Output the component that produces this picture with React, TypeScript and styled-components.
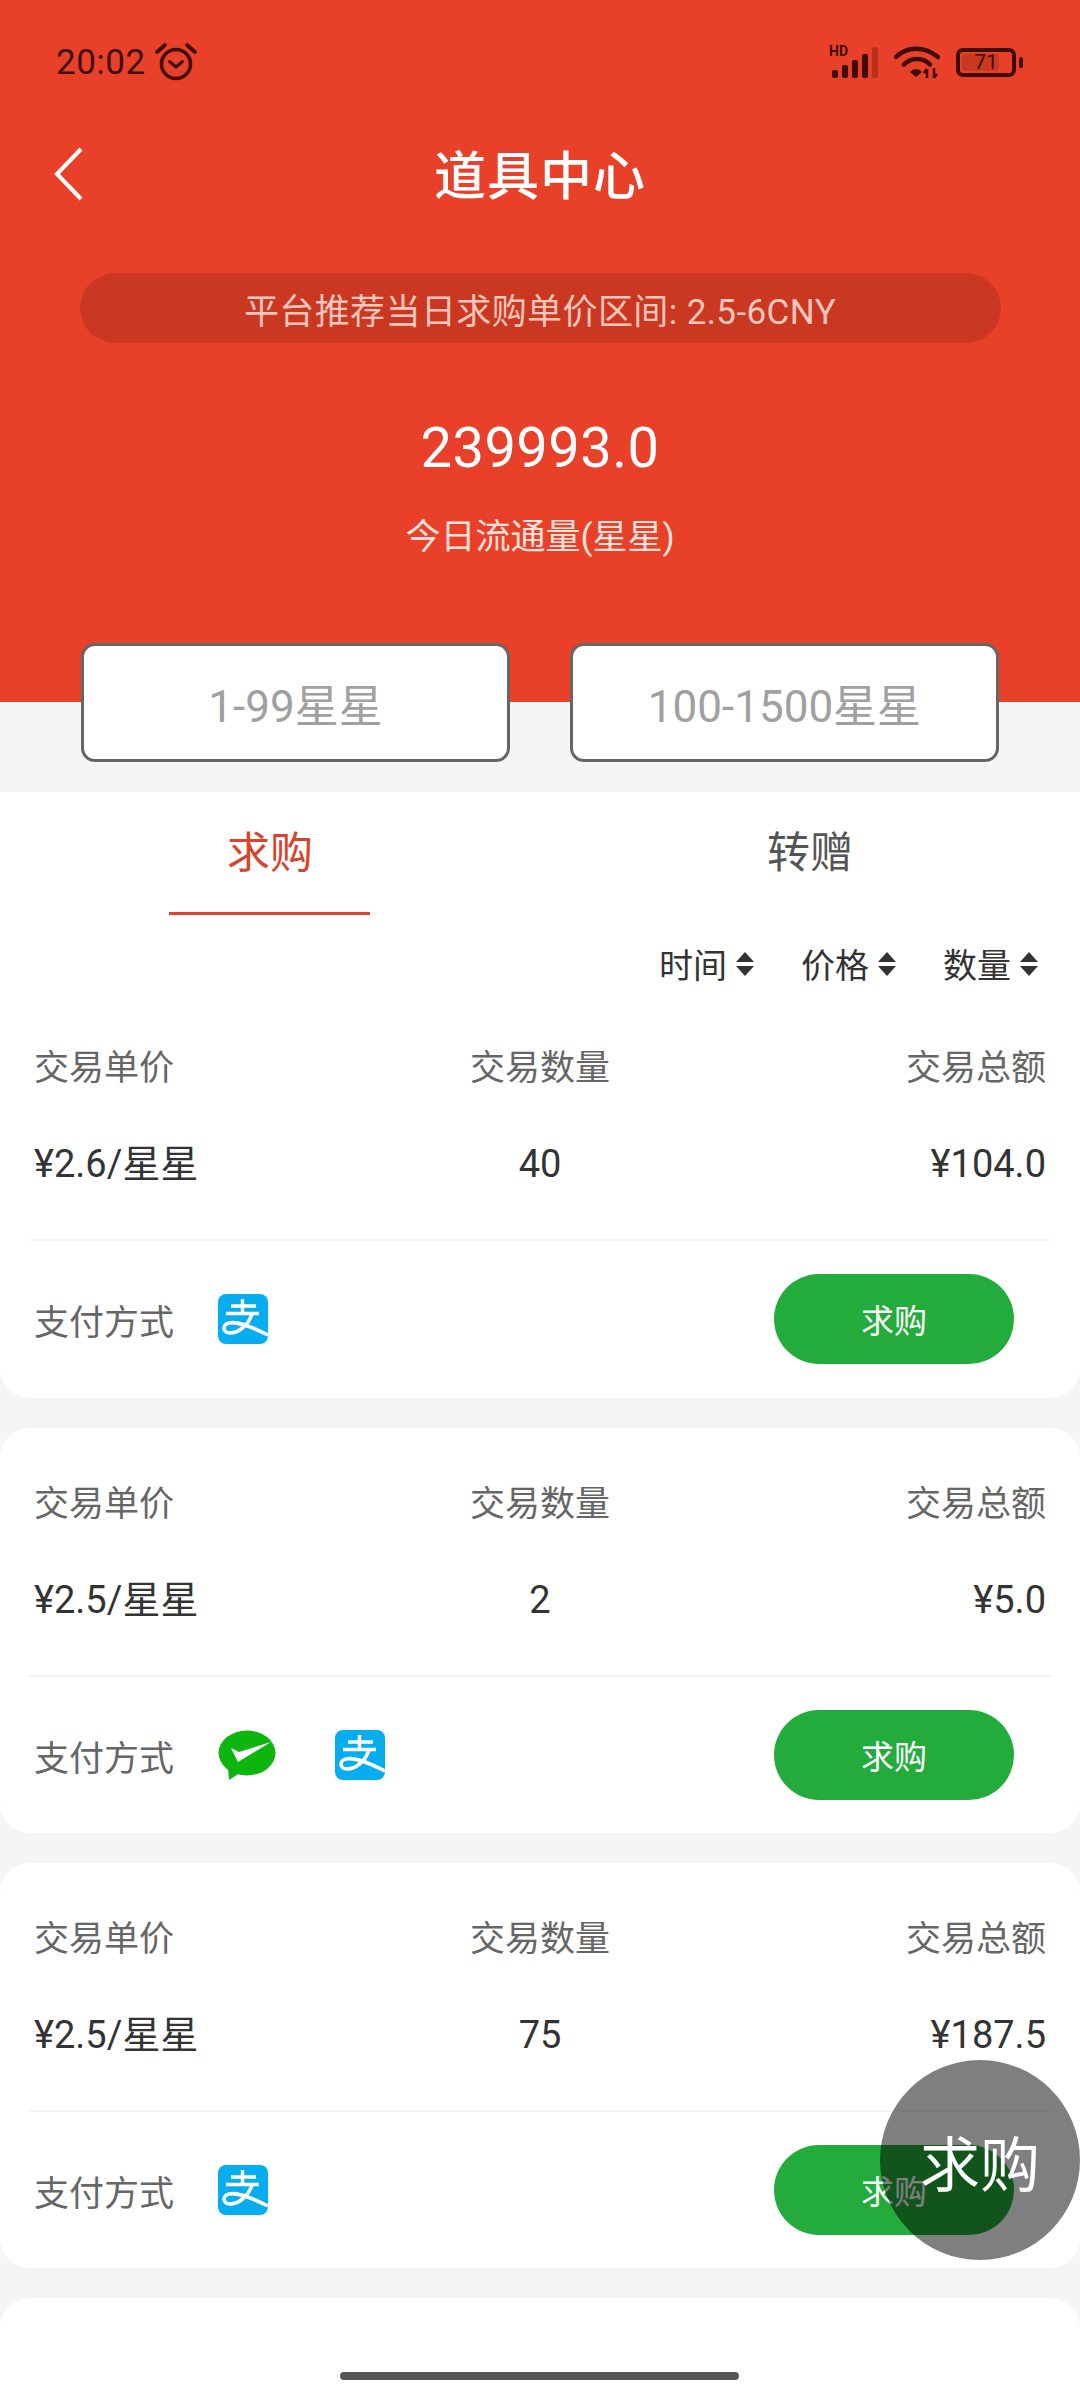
import { FC } from "react";
import styled, { createGlobalStyle } from "styled-components";

const GlobalStyle = createGlobalStyle`
  html, body {
    margin: 0;
    padding: 0;
    background: #f5f5f5;
  }
  * {
    box-sizing: border-box;
  }
`;

// css
const Page = styled.div`
  position: relative;
  width: 1080px;
  height: 2400px;
  overflow: hidden;
  background: #f5f5f5;
  font-family: Roboto, "Noto Sans CJK SC", sans-serif;
`;

const Header = styled.header`
  height: 702px;
  background: #e94129;
  display: flex;
  flex-direction: column;
  align-items: center;
`;

const StatusBar = styled.div`
  width: 100%;
  height: 124px;
  padding: 0 64px 0 56px;
  display: flex;
  align-items: center;
  justify-content: space-between;
  color: #3f0d05;
`;

const StatusLeft = styled.div`
  display: flex;
  align-items: center;
  gap: 9px;
`;

const Clock = styled.span`
  font-size: 35px;
  letter-spacing: 0.5px;
`;

const StatusRight = styled.div`
  display: flex;
  align-items: center;
  gap: 13px;
`;

const SignalWrap = styled.div`
  position: relative;
  width: 50px;
  height: 32px;
`;

const HdLabel = styled.span`
  position: absolute;
  left: -2px;
  top: -3px;
  font-size: 14px;
  line-height: 16px;
  font-weight: 700;
`;

const Battery = styled.div`
  position: relative;
  width: 60px;
  height: 29px;
  margin-left: 3px;
  border: 4px solid #3f0d05;
  border-radius: 7px;
  display: flex;
  align-items: center;
  justify-content: center;
  overflow: visible;
  &::after {
    content: "";
    position: absolute;
    right: -11px;
    top: 5px;
    width: 4px;
    height: 11px;
    border-radius: 2px;
    background: #3f0d05;
  }
`;

const BatteryFill = styled.div`
  position: absolute;
  left: 2px;
  top: 2px;
  bottom: 2px;
  border-radius: 2px;
  background: #c83a20;
`;

const BatteryText = styled.span`
  position: relative;
  font-size: 21px;
  line-height: 21px;
`;

const TitleBar = styled.div`
  position: relative;
  width: 100%;
  height: 96px;
  display: flex;
  align-items: center;
  justify-content: center;
`;

const BackButton = styled.div`
  position: absolute;
  left: 52px;
  top: 22px;
  width: 34px;
  height: 56px;
`;

const Title = styled.h1`
  margin: 0;
  font-size: 52px;
  font-weight: 500;
  color: #fff;
  letter-spacing: 1px;
`;

const Notice = styled.div`
  width: 921px;
  height: 70px;
  margin-top: 53px;
  border-radius: 35px;
  background: #ca3822;
  color: #fbc6bb;
  font-size: 35px;
  letter-spacing: 0.4px;
  display: flex;
  align-items: center;
  justify-content: center;
`;

const Amount = styled.div`
  margin-top: 65px;
  height: 80px;
  line-height: 80px;
  font-size: 56px;
  color: #fff;
  letter-spacing: 0.5px;
`;

const AmountLabel = styled.div`
  margin-top: 25px;
  height: 50px;
  line-height: 50px;
  font-size: 35px;
  color: #fde3dd;
`;

const PackRow = styled.div`
  position: relative;
  margin-top: -59px;
  padding: 0 81px;
  display: flex;
  justify-content: space-between;
`;

const PackButton = styled.div`
  width: 429px;
  height: 119px;
  background: #fff;
  border: 3px solid #666;
  border-radius: 14px;
  color: #a0a0a0;
  font-size: 44px;
  display: flex;
  align-items: center;
  justify-content: center;
`;

const Tabs = styled.div`
  margin-top: 30px;
  height: 124px;
  background: #fff;
  display: grid;
  grid-template-columns: 1fr 1fr;
`;

const Tab = styled.div<{ $active?: boolean }>`
  position: relative;
  display: flex;
  justify-content: center;
  padding-top: 31px;
  font-size: 43px;
  line-height: 60px;
  color: ${(p) => (p.$active ? "#d9432b" : "#555")};
  &::after {
    content: "";
    display: ${(p) => (p.$active ? "block" : "none")};
    position: absolute;
    left: 169px;
    bottom: 1px;
    width: 201px;
    height: 3px;
    background: #d9432b;
  }
`;

const SortBar = styled.div`
  height: 95px;
  background: #fff;
  padding-right: 42px;
  display: flex;
  align-items: center;
  justify-content: flex-end;
  gap: 47px;
`;

const SortItem = styled.div`
  display: flex;
  align-items: center;
  gap: 9px;
  font-size: 34px;
  color: #333;
`;

const Card = styled.section<{ $first?: boolean }>`
  background: #fff;
  height: ${(p) => (p.$first ? "387px" : "405px")};
  margin-bottom: 30px;
  padding-top: ${(p) => (p.$first ? "33px" : "52px")};
  border-radius: ${(p) => (p.$first ? "0 0 30px 30px" : "30px")};
`;

const Columns = styled.div`
  display: grid;
  grid-template-columns: 1fr 1fr 1fr;
  padding: 0 34px;
`;

const Label = styled.div<{ $align: string }>`
  height: 50px;
  line-height: 50px;
  font-size: 35px;
  color: #666;
  text-align: ${(p) => p.$align};
`;

const Value = styled.div<{ $align: string }>`
  margin-top: 45px;
  height: 50px;
  line-height: 50px;
  font-size: 38px;
  color: #333;
  text-align: ${(p) => p.$align};
`;

const Divider = styled.div`
  height: 2px;
  margin: 50px 30px 0;
  background: #f3f3f3;
`;

const PayRow = styled.div`
  margin-top: 33px;
  padding: 0 66px 0 34px;
  display: flex;
  align-items: center;
`;

const PayLabel = styled.span`
  font-size: 35px;
  color: #666;
  margin-right: 44px;
`;

const PayIcons = styled.div`
  display: flex;
  align-items: center;
  gap: 59px;
`;

const BuyButton = styled.div`
  margin-left: auto;
  width: 240px;
  height: 90px;
  border-radius: 45px;
  background: #23ab3b;
  color: #fff;
  font-size: 33px;
  display: flex;
  align-items: center;
  justify-content: center;
`;

const FloatButton = styled.div`
  position: absolute;
  left: 880px;
  top: 2060px;
  width: 200px;
  height: 200px;
  border-radius: 50%;
  background: rgba(0, 0, 0, 0.5);
  color: #fff;
  font-size: 60px;
  display: flex;
  align-items: center;
  justify-content: center;
`;

const HomeBar = styled.div`
  position: absolute;
  left: 340px;
  bottom: 20px;
  width: 399px;
  height: 8px;
  border-radius: 4px;
  background: #555;
`;

const AlarmIcon: FC = () => (
  <svg width="42" height="40" viewBox="0 0 42 40" fill="none" stroke="#3f0d05">
    <circle cx="21" cy="22" r="14.5" strokeWidth="3.6" />
    <path d="M14.5 19.5 21 25l6.5-5.5" strokeWidth="3" strokeLinecap="round" strokeLinejoin="round" />
    <path d="M2 10 10 3M40 10 32 3" strokeWidth="4" strokeLinecap="round" />
  </svg>
);

const SignalIcon: FC = () => (
  <SignalWrap>
    <HdLabel>HD</HdLabel>
    <svg width="50" height="32" viewBox="0 0 50 32" fill="#3f0d05">
      <rect x="1" y="24" width="6" height="8" rx="2" />
      <rect x="11" y="19" width="6" height="13" rx="2" />
      <rect x="21" y="14" width="6" height="18" rx="2" />
      <rect x="31" y="8" width="6" height="24" rx="2" />
      <rect x="41" y="1" width="6" height="31" rx="2" fill="#b8321b" />
    </svg>
  </SignalWrap>
);

const WifiIcon: FC = () => (
  <svg width="46" height="34" viewBox="0 0 46 34" fill="none" stroke="#3f0d05">
    <path d="M2 12C13 1 31 1 44 12" strokeWidth="4.5" strokeLinecap="round" />
    <path d="M10 19.5C17 12 29 12 36 19.5" strokeWidth="4.5" strokeLinecap="round" />
    <path d="M16 32l-6-5c3-4 9-4 12 0z" transform="translate(6 0)" fill="#3f0d05" stroke="none" />
    <path d="M33 33v-9M33 24l-3 4M40 23v10M40 33l3-4" strokeWidth="2.6" />
  </svg>
);

const AlipayIcon: FC = () => (
  <svg width="50" height="50" viewBox="0 0 50 50" fill="none">
    <rect width="50" height="50" rx="8" fill="#06aef0" />
    <path d="M13 12H38M8 19.5H41M24.5 5V19" stroke="#fff" strokeWidth="3.4" />
    <path d="M34 20C30 32 20 39 12 39C4.5 39 4 30.5 11 29C20 27 34 33 50 41" stroke="#fff" strokeWidth="3.6" />
  </svg>
);

const WechatIcon: FC = () => (
  <svg width="58" height="50" viewBox="0 0 58 50" fill="none">
    <ellipse cx="29" cy="23" rx="28.5" ry="22.5" fill="#0fb50f" />
    <path d="M10 38 11 50 22 43z" fill="#0fb50f" />
    <path d="M13 18 21 22 53 12 20 32z" fill="#fff" />
  </svg>
);

const SortCaret: FC = () => (
  <svg width="18" height="24" viewBox="0 0 18 24" fill="#333">
    <path d="M9 0 18 10H0zM9 24 0 14H18z" />
  </svg>
);

type PayType = "alipay" | "wechat";

interface IOrder {
  price: string;
  count: string;
  total: string;
  pay: PayType[];
}

const orders: IOrder[] = [
  { price: "¥2.6/星星", count: "40", total: "¥104.0", pay: ["alipay"] },
  { price: "¥2.5/星星", count: "2", total: "¥5.0", pay: ["wechat", "alipay"] },
  { price: "¥2.5/星星", count: "75", total: "¥187.5", pay: ["alipay"] },
];

const App: FC = () => {
  return (
    <Page>
      <GlobalStyle />
      <Header>
        <StatusBar>
          <StatusLeft>
            <Clock>20:02</Clock>
            <AlarmIcon />
          </StatusLeft>
          <StatusRight>
            <SignalIcon />
            <WifiIcon />
            <Battery>
              <BatteryFill style={{ width: "71%" }} />
              <BatteryText>71</BatteryText>
            </Battery>
          </StatusRight>
        </StatusBar>
        <TitleBar>
          <BackButton>
            <svg width="34" height="56" viewBox="0 0 34 56" fill="none">
              <path d="M29 3 5 28l24 25" stroke="#fff" strokeWidth="4" />
            </svg>
          </BackButton>
          <Title>道具中心</Title>
        </TitleBar>
        <Notice>平台推荐当日求购单价区间: 2.5-6CNY</Notice>
        <Amount>239993.0</Amount>
        <AmountLabel>今日流通量(星星)</AmountLabel>
      </Header>
      <PackRow>
        <PackButton>1-99星星</PackButton>
        <PackButton>100-1500星星</PackButton>
      </PackRow>
      <Tabs>
        <Tab $active>求购</Tab>
        <Tab>转赠</Tab>
      </Tabs>
      <SortBar>
        {["时间", "价格", "数量"].map((name) => (
          <SortItem key={name}>
            {name}
            <SortCaret />
          </SortItem>
        ))}
      </SortBar>
      {orders.map((order, index) => (
        <Card key={`order-${index}`} $first={index === 0}>
          <Columns>
            <Label $align="left">交易单价</Label>
            <Label $align="center">交易数量</Label>
            <Label $align="right">交易总额</Label>
            <Value $align="left">{order.price}</Value>
            <Value $align="center">{order.count}</Value>
            <Value $align="right">{order.total}</Value>
          </Columns>
          <Divider />
          <PayRow>
            <PayLabel>支付方式</PayLabel>
            <PayIcons>
              {order.pay.map((pay) =>
                pay === "alipay" ? <AlipayIcon key={pay} /> : <WechatIcon key={pay} />
              )}
            </PayIcons>
            <BuyButton>求购</BuyButton>
          </PayRow>
        </Card>
      ))}
      <Card />
      <FloatButton>求购</FloatButton>
      <HomeBar />
    </Page>
  );
};

export default App;
